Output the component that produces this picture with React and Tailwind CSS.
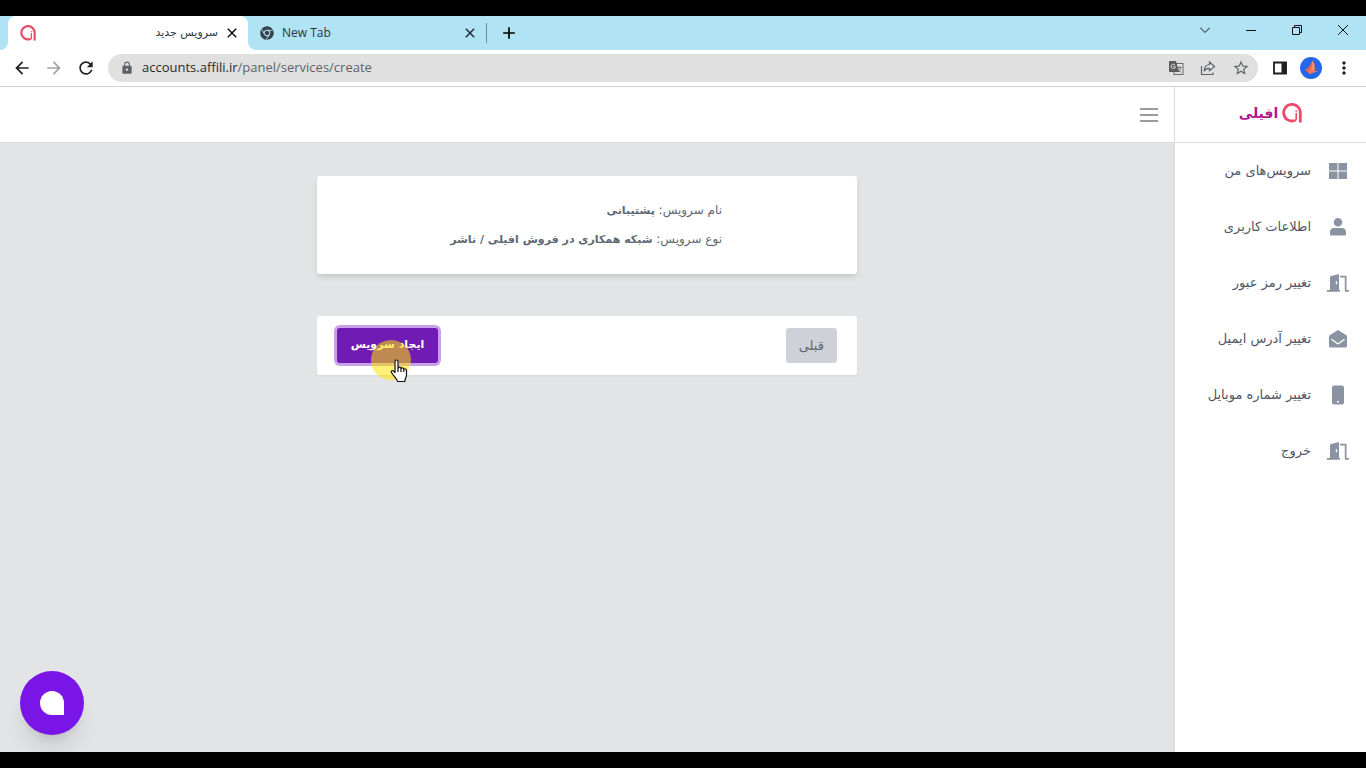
import { FaChrome } from "react-icons/fa";
import { MdLock, MdRefresh, MdArrowBack, MdArrowForward, MdStarBorder, MdMoreVert, MdAdd, MdClose } from "react-icons/md";


const menu = [
    { label: 'سرویس‌های من', icon: 'grid' },
    { label: 'اطلاعات کاربری', icon: 'user' },
    { label: 'تغییر رمز عبور', icon: 'door' },
    { label: 'تغییر آدرس ایمیل', icon: 'mail' },
    { label: 'تغییر شماره موبایل', icon: 'phone' },
    { label: 'خروج', icon: 'door' },
];

const MenuIcon = function ({ name }) {
    return (
        <svg viewBox="0 0 22 22" className="w-[22px] h-[22px] shrink-0 text-[#8a93a2]" fill="currentColor" aria-hidden="true">
            {
                name === 'grid'
                && <path d="M2 3h8.500v7.500H2zM11.500 3H20v7.500h-8.500zM2 11.500h8.500V19H2zM11.500 11.500H20V19h-8.500z" />
            }
            {
                name === 'user'
                && <path d="M11 2a4.300 4.300 0 1 1 0 8.600A4.300 4.300 0 0 1 11 2zM7 12h8c2.600 0 4 1.800 4 4v2c0 1-.6 1.500-1.500 1.500h-13C3.600 19.500 3 19 3 18v-2c0-2.200 1.400-4 4-4z" />
            }
            {
                name === 'door'
                && <path fillRule="evenodd" d="M0 18h3V4.800L4 4l8-2v16h1v1.700H0zM8.800 9.300v3h1.400v-3zM13 3.800h6.500V18H22v1.700h-4.200V5.500H13z" />
            }
            {
                name === 'mail'
                && (
                    <>
                        <path d="M11 2l8 5c.7.500 1 1 1 1.800V18c0 .9-.6 1.500-1.500 1.500h-15C2.600 19.500 2 18.900 2 18V8.800C2 8 2.300 7.500 3 7z" />
                        <path d="M4.500 11.300l5.500 4c.7.500 1.300.5 2 0l5.500-4" fill="none" stroke="#fff" strokeWidth="1.400" />
                    </>
                )
            }
            {
                name === 'phone'
                && (
                    <>
                        <rect x="5" y="1.500" width="12" height="19" rx="2" />
                        <circle cx="11" cy="17.800" r="1" fill="#fff" />
                    </>
                )
            }
        </svg>
    )
}

const LogoMark = function ({ className }) {
    return (
        <svg viewBox="0 0 20 20" className={className} fill="none" stroke="#ee4b6a" aria-hidden="true">
            <path d="M12.500 17.600A8.300 8.300 0 1 1 18.300 9.700V19.500" strokeWidth="2.800" />
            <path d="M14.200 10v5.500c0 1.600-1 2.500-2.600 2.500" strokeWidth="1.600" />
            <circle cx="14.200" cy="8" r=".5" strokeWidth="1" />
        </svg>
    )
}

const TabStrip = function () {
    return (
        <div className="flex h-[34px] bg-[#b0e3f3] text-xs text-[#2b3440]">
            <div className="w-2 bg-white">
                <div className="h-full rounded-br-lg bg-[#b0e3f3]"></div>
            </div>
            <div className="w-60 flex items-center justify-between rounded-t-lg bg-white pl-3 pr-2">
                <LogoMark className="w-4 h-4" />
                <div className="flex items-center gap-1.5">
                    <span dir="rtl" className="font-['DejaVu_Sans',sans-serif] text-[11px]">سرویس جدید</span>
                    <button type="button" aria-label="Close tab"><MdClose className="w-4 h-4 text-black" /></button>
                </div>
            </div>
            <div className="bg-white">
                <div className="w-[238px] h-full flex items-center rounded-bl-lg bg-[#b0e3f3] pl-3">
                    <FaChrome className="w-3.5 h-3.5 text-[#37434c]" />
                    <span className="ml-2 grow">New Tab</span>
                    <button type="button" aria-label="Close tab" className="mr-2"><MdClose className="w-4 h-4 text-[#12242c]" /></button>
                </div>
            </div>
            <div className="w-px h-5 my-auto bg-[#6d8d98]"></div>
            <button type="button" aria-label="New tab" className="ml-3"><MdAdd className="w-5 h-5 text-black" /></button>
            <div className="ml-auto flex h-7 items-center">
                <button type="button" aria-label="Search tabs" className="w-[46px] flex justify-center">
                    <svg viewBox="0 0 10 10" className="w-2.5 h-2.5" fill="none" stroke="#111"><path d="M0 2.500l5 5 5-5" /></svg>
                </button>
                <button type="button" aria-label="Minimize" className="w-[46px] flex justify-center">
                    <svg viewBox="0 0 10 10" className="w-2.5 h-2.5" fill="none" stroke="#111"><path d="M0 5.500h10" /></svg>
                </button>
                <button type="button" aria-label="Restore" className="w-[46px] flex justify-center">
                    <svg viewBox="0 0 10 10" className="w-2.5 h-2.5" fill="none" stroke="#111"><path d="M.5 2.500h7v7h-7zM2.500 2.500v-2h7v7h-2" /></svg>
                </button>
                <button type="button" aria-label="Close window" className="w-[46px] flex justify-center">
                    <svg viewBox="0 0 10 10" className="w-2.5 h-2.5" fill="none" stroke="#111"><path d="M0 0l10 10M10 0L0 10" /></svg>
                </button>
            </div>
        </div>
    )
}

const Toolbar = function () {
    return (
        <div className="flex h-[37px] items-center border-b border-[#cfcfcf] bg-white px-3 text-[#1f1f1f]">
            <button type="button" aria-label="Back"><MdArrowBack className="w-5 h-5" /></button>
            <button type="button" aria-label="Forward" className="ml-3"><MdArrowForward className="w-5 h-5 text-[#a3a3a3]" /></button>
            <button type="button" aria-label="Reload" className="ml-3"><MdRefresh className="w-5 h-5" /></button>
            <div className="ml-3 flex h-7 grow items-center rounded-full bg-[#e0e0e0] pl-3 pr-2 text-[#5f6368]">
                <MdLock className="w-3.5 h-3.5 shrink-0" />
                <a href="#" className="ml-2 grow text-[13px]"><span className="text-[#2a2a2a]">accounts.affili.ir</span>/panel/services/create</a>
                <div className="flex items-center gap-4">
                    <button type="button" aria-label="Translate">
                        <svg viewBox="0 0 16 16" className="w-4 h-4">
                            <rect x="6" y="3.500" width="9" height="11" fill="#e0e0e0" stroke="#6b6b6b" />
                            <path d="M8.500 7.500h5M11 6.300v1.200M12.800 7.500c-.5 2-1.800 3.500-3.500 4.300M9.500 9.300c.7 1.300 2 2.300 3.400 2.900" stroke="#6b6b6b" fill="none" />
                            <path d="M2 1h6l3 11H2a1 1 0 0 1-1-1V2a1 1 0 0 1 1-1z" fill="#5c5c5c" />
                            <path d="M7 5a2.200 2.200 0 1 0 .5 1.700H5.300" stroke="#e0e0e0" fill="none" />
                        </svg>
                    </button>
                    <button type="button" aria-label="Share">
                        <svg viewBox="0 0 16 16" className="w-4 h-4" fill="none" stroke="#5f6368" strokeWidth="1.200">
                            <path d="M1.500 6v8.500h11.500v-2M9.500 2l5 4.500-5 4.300V8.500C7 8.300 5.200 9.300 4 11.300c.3-4 2.200-6.500 5.500-6.800z" />
                        </svg>
                    </button>
                    <button type="button" aria-label="Bookmark"><MdStarBorder className="w-[18px] h-[18px]" /></button>
                </div>
            </div>
            <button type="button" aria-label="Side panel" className="ml-3.5">
                <svg viewBox="0 0 16 16" className="w-4 h-4"><path d="M2 2.500h12v11H2z" fill="#fff" stroke="#1f1f1f" strokeWidth="1.800" /><path d="M9.500 2h5v12h-5z" fill="#1f1f1f" /></svg>
            </button>
            <button type="button" aria-label="Profile" className="ml-3">
                <svg viewBox="0 0 22 22" className="w-[22px] h-[22px]">
                    <circle cx="11" cy="11" r="11" fill="#2268ea" />
                    <path d="M12.500 3.500c2.500 3 2.800 7 2 11l-5-1.500z" fill="#ff8a66" />
                    <path d="M12.500 3.500L9.500 9l-5 5 6 .5z" fill="#e8604a" />
                    <path d="M9.500 12.500l8.500 2-5 1.200-3 1.500-3-2.700z" fill="#f37558" />
                </svg>
            </button>
            <button type="button" aria-label="Menu" className="ml-3"><MdMoreVert className="w-5 h-5" /></button>
        </div>
    )
}

const Sidebar = function () {
    return (
        <aside className="w-48 shrink-0 border-l border-[#d8dbe0] bg-white">
            <div className="flex h-14 items-center justify-center gap-1 border-b border-[#d8dbe0] pb-1">
                <LogoMark className="w-5 h-5" />
                <span className="text-sm leading-5 font-bold text-[#b0198b]">افیلی</span>
            </div>
            <nav>
                {
                    menu.map((item, index) => (
                        <a key={index} href="#" className="flex h-14 items-center gap-4 pr-[17px] text-[13px] text-[#4f5666]">
                            <MenuIcon name={item.icon} />
                            <span className="whitespace-nowrap">{item.label}</span>
                        </a>
                    ))
                }
            </nav>
        </aside>
    )
}

const Pointer = function () {
    return (
        <div className="pointer-events-none absolute left-[34px] top-3 w-10 h-14">
            <div className="w-10 h-10 rounded-full bg-[#ffe600]/55"></div>
            <svg viewBox="0 0 18 24" className="absolute left-[19px] top-[19px] w-[18px] h-6" fill="#fff" stroke="#111" strokeWidth="1.200" strokeLinejoin="round">
                <path d="M5 2.500c0-2 3-2 3 0V9c.5-1.300 2.800-1.200 3 .4.700-1 2.600-.7 2.800.8 1-.8 2.700-.2 2.700 1.300V16c0 2-1.500 3.500-1.700 6.500H7.500C7 19.500 3.500 17 1.500 13.500c-.8-1.700 1-2.600 2.200-1.400L5 13.500z" />
                <path d="M8 9v4M11 9.500V13M13.800 10.500V13" fill="none" />
            </svg>
        </div>
    )
}

const Content = function () {
    return (
        <main className="grow bg-[#e3e4e6] px-4 pt-[33px] text-[#5c6873]">
            <div className="mx-auto max-w-[540px]">
                <section className="rounded-[3px] bg-white py-5 shadow-md">
                    <div className="mx-auto w-1/2 text-xs leading-[29px] whitespace-nowrap">
                        <p>نام سرویس: <strong className="text-[11px]">پشتیبانی</strong></p>
                        <p>نوع سرویس: <strong className="text-[11px]">شبکه همکاری در فروش افیلی / ناشر</strong></p>
                    </div>
                </section>
                <section className="mt-[42px] flex items-center justify-between rounded-[3px] bg-white py-3 px-5 shadow-xs">
                    <button type="button" className="h-[35px] rounded-[3px] bg-[#ced2d8] px-[13px] text-[13px]">قبلی</button>
                    <div className="relative">
                        <button type="button" className="h-[35px] w-[101px] whitespace-nowrap rounded-[3px] bg-[#701bb3] text-[11px] font-bold text-white ring-3 ring-[#c9a0ea]">ایجاد سرویس</button>
                        <Pointer />
                    </div>
                </section>
            </div>
        </main>
    )
}

const App = function () {
    return (
        <div className="flex min-h-screen flex-col border-y-16 border-black bg-white font-['Open_Sans',sans-serif]">
            <TabStrip />
            <Toolbar />
            <div dir="rtl" className="relative flex grow font-['DejaVu_Sans',sans-serif]">
                <Sidebar />
                <div className="flex grow flex-col">
                    <header className="flex h-14 items-center border-b border-[#d8dbe0] bg-white px-4">
                        <button type="button" aria-label="منو">
                            <svg viewBox="0 0 18 18" className="w-[18px] h-[18px]" stroke="#777b82" strokeWidth="1.500"><path d="M0 3h18M0 9h18M0 15h18" /></svg>
                        </button>
                    </header>
                    <Content />
                </div>
                <button type="button" aria-label="گفتگو" className="absolute bottom-[17px] left-5 flex w-16 h-16 items-center justify-center rounded-full bg-[#7a15e8] shadow-xl">
                    <span className="w-6 h-6 rounded-full rounded-br-none bg-white"></span>
                </button>
            </div>
        </div>
    )
}

export default App;
